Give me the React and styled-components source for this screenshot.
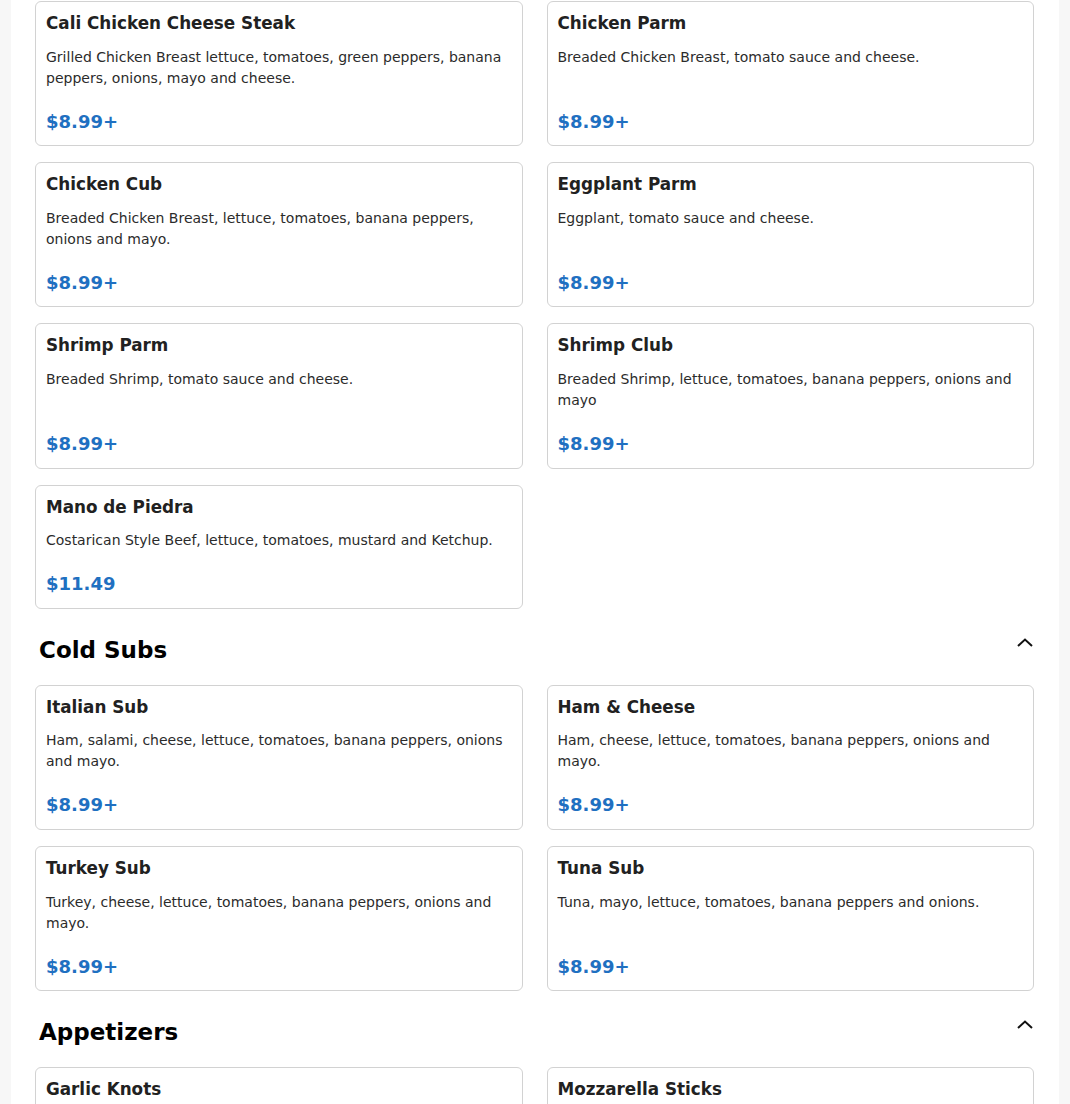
import React, { useState } from "react";
import styled, { createGlobalStyle } from "styled-components";

const GlobalStyle = createGlobalStyle`
  body {
    margin: 0;
    background: #f7f7f7;
    font-family: "DejaVu Sans", Verdana, sans-serif;
  }
`;

const menu = [
  {
    name: null,
    items: [
      {
        title: "Cali Chicken Cheese Steak",
        desc: "Grilled Chicken Breast lettuce, tomatoes, green peppers, banana peppers, onions, mayo and cheese.",
        price: "$8.99+",
      },
      {
        title: "Chicken Parm",
        desc: "Breaded Chicken Breast, tomato sauce and cheese.",
        price: "$8.99+",
      },
      {
        title: "Chicken Cub",
        desc: "Breaded Chicken Breast, lettuce, tomatoes, banana peppers, onions and mayo.",
        price: "$8.99+",
      },
      {
        title: "Eggplant Parm",
        desc: "Eggplant, tomato sauce and cheese.",
        price: "$8.99+",
      },
      {
        title: "Shrimp Parm",
        desc: "Breaded Shrimp, tomato sauce and cheese.",
        price: "$8.99+",
      },
      {
        title: "Shrimp Club",
        desc: "Breaded Shrimp, lettuce, tomatoes, banana peppers, onions and mayo",
        price: "$8.99+",
      },
      {
        title: "Mano de Piedra",
        desc: "Costarican Style Beef, lettuce, tomatoes, mustard and Ketchup.",
        price: "$11.49",
      },
    ],
  },
  {
    name: "Cold Subs",
    items: [
      {
        title: "Italian Sub",
        desc: "Ham, salami, cheese, lettuce, tomatoes, banana peppers, onions and mayo.",
        price: "$8.99+",
      },
      {
        title: "Ham & Cheese",
        desc: "Ham, cheese, lettuce, tomatoes, banana peppers, onions and mayo.",
        price: "$8.99+",
      },
      {
        title: "Turkey Sub",
        desc: "Turkey, cheese, lettuce, tomatoes, banana peppers, onions and mayo.",
        price: "$8.99+",
      },
      {
        title: "Tuna Sub",
        desc: "Tuna, mayo, lettuce, tomatoes, banana peppers and onions.",
        price: "$8.99+",
      },
    ],
  },
  {
    name: "Appetizers",
    items: [
      {
        title: "Garlic Knots",
        desc: "Fresh baked knots with garlic butter and parmesan.",
        price: "$5.99",
      },
      {
        title: "Mozzarella Sticks",
        desc: "Breaded mozzarella served with marinara sauce.",
        price: "$6.99",
      },
    ],
  },
];

const Page = styled.main`
  background: #fff;
  margin: 0 11px;
  padding: 1px 25px 40px 24px;
  min-height: 100vh;
`;

const Grid = styled.div`
  display: grid;
  grid-template-columns: 1fr 1fr;
  column-gap: 24px;
  row-gap: 16px;
`;

const SectionHeader = styled.div`
  display: flex;
  justify-content: space-between;
  align-items: flex-start;
  padding: 27px 1px 21px 4px;
`;

const SectionTitle = styled.h2`
  margin: 0;
  font-size: 23px;
  line-height: 28px;
  font-weight: 700;
  color: #000;
`;

const ToggleButton = styled.button`
  background: transparent;
  border: none;
  padding: 0;
  margin-top: 2px;
  width: 16px;
  height: 10px;
  display: flex;
  cursor: pointer;
  color: #111;
`;

const Card = styled.div`
  display: flex;
  flex-direction: column;
  border: 1px solid #d2d2d2;
  border-radius: 6px;
  padding: 11px 10px 13px;
`;

const ItemTitle = styled.h3`
  margin: 0 0 12px;
  font-size: 16.8px;
  line-height: 21.6px;
  font-weight: 700;
  color: #212121;
`;

const ItemDesc = styled.p`
  margin: 0 0 22px;
  font-size: 14px;
  line-height: 21px;
  color: #2b2b2b;
`;

const Price = styled.div`
  margin-top: auto;
  font-size: 18px;
  line-height: 21.6px;
  font-weight: 700;
  color: #1f70c1;
`;

const Chevron = ({ open }) => (
  <svg width="16" height="10" viewBox="0 0 16 10" fill="none">
    <polyline
      points={open ? "1,8 8,1.6 15,8" : "1,2 8,8.4 15,2"}
      stroke="currentColor"
      strokeWidth="2"
    />
  </svg>
);

const Section = ({ section }) => {
  const [open, setOpen] = useState(true);
  return (
    <section>
      {section.name && (
        <SectionHeader>
          <SectionTitle>{section.name}</SectionTitle>
          <ToggleButton onClick={() => setOpen(!open)} aria-label="toggle">
            <Chevron open={open} />
          </ToggleButton>
        </SectionHeader>
      )}
      {open && (
        <Grid>
          {section.items.map((item) => (
            <Card key={item.title}>
              <ItemTitle>{item.title}</ItemTitle>
              <ItemDesc>{item.desc}</ItemDesc>
              <Price>{item.price}</Price>
            </Card>
          ))}
        </Grid>
      )}
    </section>
  );
};

const App = () => {
  return (
    <>
      <GlobalStyle />
      <Page>
        {menu.map((section, i) => (
          <Section key={i} section={section} />
        ))}
      </Page>
    </>
  );
};

export default App;
